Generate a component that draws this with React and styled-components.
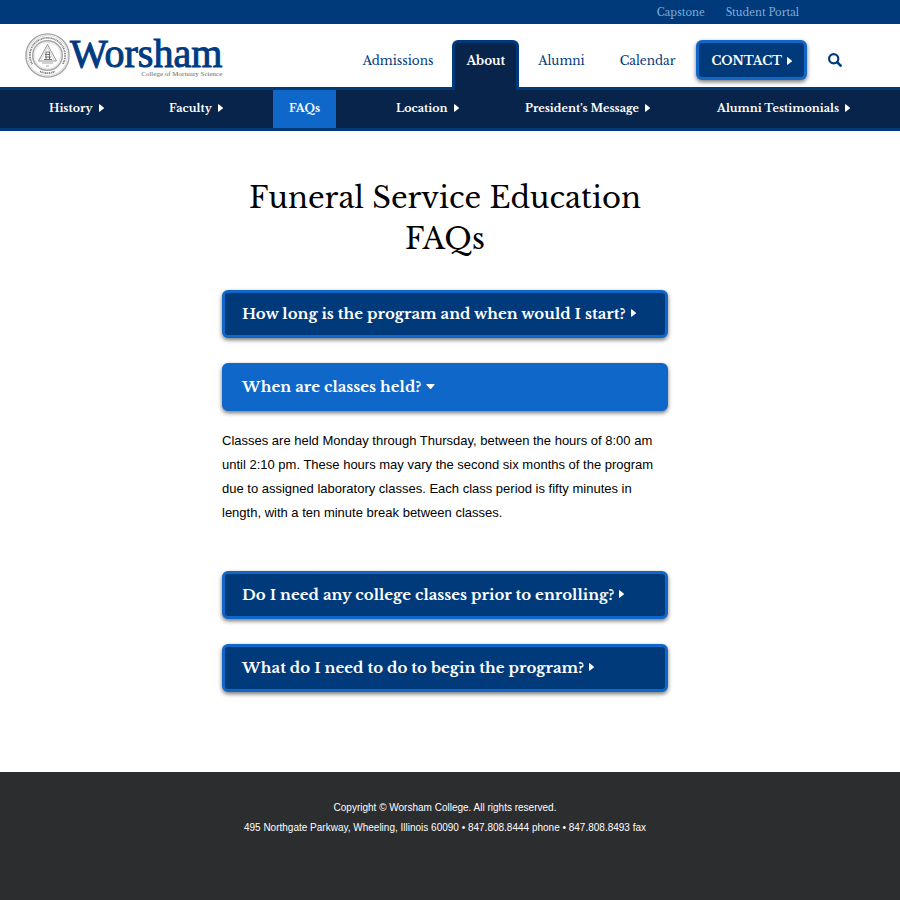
import React, { useState } from "react";
import styled, { createGlobalStyle, css } from "styled-components";

const color = {
  blue: "#003a7a",
  bright: "#0f67c9",
  navy: "#08244a",
  charcoal: "#2c2d2f",
};
const serif = '"Libre Baskerville", "Liberation Serif", serif';
const sans = '"Liberation Sans", Arial, sans-serif';

const GlobalStyle = createGlobalStyle`
  *, *::before, *::after { box-sizing: border-box; }
  body { margin: 0; background: #fff; color: #000; font-family: ${serif}; }
  a { color: inherit; text-decoration: none; }
  ul { list-style: none; margin: 0; padding: 0; }
`;

const Page = styled.div`
  display: flex;
  flex-direction: column;
  min-height: 100vh;
`;

const TopBar = styled.nav`
  display: flex;
  justify-content: flex-end;
  align-items: center;
  gap: 21px;
  height: 24px;
  padding-right: 101px;
  background: ${color.blue};
  color: #83add9;
  font-size: 10px;
`;

const Header = styled.header`
  display: flex;
  justify-content: space-between;
  height: 63px;
  padding: 0 58px 0 25px;
`;

const Brand = styled.a`
  display: flex;
  align-items: flex-start;
  padding-top: 9px;
  font-family: "Liberation Serif", serif;
`;

const Seal = styled.svg`
  width: 45px;
  height: 45px;
`;

const Wordmark = styled.span`
  display: flex;
  flex-direction: column;
  align-items: flex-end;
`;

const BrandName = styled.span`
  margin-bottom: -5px;
  color: #003b82;
  font-size: 40px;
  line-height: 42px;
  -webkit-text-stroke: 1px #003b82;
`;

const Tagline = styled.span`
  color: #6b6b70;
  font-size: 7px;
  line-height: 8px;
`;

const MainNav = styled.nav`
  display: flex;
  align-items: flex-start;
  gap: 3px;
  padding-top: 16px;
  font-size: 12px;
  line-height: 42px;
  color: ${color.blue};
`;

const MainLink = styled.a`
  padding: 0 16px;
  ${({ $active }) =>
    $active &&
    css`
      align-self: stretch;
      margin-bottom: -3px;
      padding: 0 11px;
      border: solid ${color.blue};
      border-width: 3px 3px 0;
      border-radius: 6px 6px 0 0;
      background: ${color.navy};
      color: #fff;
      font-weight: bold;
      line-height: 36px;
      z-index: 1;
    `}
`;

const raised = css`
  border: 3px solid ${color.bright};
  border-radius: 6px;
  background: ${color.blue};
  color: #fff;
  font-family: ${serif};
  font-weight: bold;
  box-shadow: 0 2px 4px rgba(0, 0, 0, 0.55);
`;

const ContactLink = styled.a`
  ${raised}
  display: flex;
  align-items: center;
  gap: 5px;
  height: 40px;
  margin-left: 2px;
  padding: 2px 12px 0;
`;

const SearchButton = styled.button`
  display: flex;
  align-items: center;
  height: 40px;
  margin-left: 18px;
  padding: 0;
  border: 0;
  background: none;
  color: ${color.blue};
`;

const SubNav = styled.nav`
  padding-left: 33px;
  border: solid ${color.blue};
  border-width: 3px 0;
  background: ${color.navy};
`;

const SubList = styled.ul`
  display: grid;
  grid-template-columns: 120fr 120fr 107fr 129fr 192fr 199fr;
  justify-items: start;
`;

const SubLink = styled.a`
  display: flex;
  align-items: center;
  gap: 6px;
  height: 38px;
  padding: 0 16px 2px;
  background: ${({ $active }) => ($active ? color.bright : "transparent")};
  color: #fff;
  font-size: 11px;
  font-weight: bold;
  white-space: nowrap;
`;

const Main = styled.main`
  width: 100%;
  max-width: 456px;
  margin: 0 auto;
  padding: 47px 10px 80px 0;
`;

const Title = styled.h1`
  margin: 0 0 30px;
  font-size: 29px;
  font-weight: normal;
  line-height: 41px;
  text-align: center;
`;

const FaqList = styled.div`
  display: flex;
  flex-direction: column;
  gap: 25px;
`;

const Heading = styled.h2`
  margin: 0;
`;

const Question = styled.button`
  ${raised}
  display: flex;
  align-items: center;
  gap: 5px;
  width: 100%;
  height: 48px;
  padding: 0 17px 2px;
  background: ${({ $open }) => ($open ? color.bright : color.blue)};
  font-size: 15px;
  text-align: left;
  cursor: pointer;
`;

const Answer = styled.p`
  margin: 0;
  padding: 18px 0 21px;
  font-family: ${sans};
  font-size: 13px;
  line-height: 24px;
`;

const Footer = styled.footer`
  flex: 1;
  padding: 26px 10px 60px 0;
  background: ${color.charcoal};
  color: #fff;
  font-family: ${sans};
  font-size: 10px;
  line-height: 20px;
  text-align: center;
`;

const FooterLine = styled.p`
  margin: 0;
`;

const CaretRight = () => (
  <svg width="5" height="8" viewBox="0 0 5 8" aria-hidden="true">
    <path d="M0 .6Q0 0 .6.3L4.7 3.5Q5 4 4.7 4.5L.6 7.7Q0 8 0 7.4Z" fill="currentColor" />
  </svg>
);

const CaretDown = () => (
  <svg width="9" height="8" viewBox="0 0 9 8" aria-hidden="true">
    <path d="M.8 2H8.2Q9 2.2 8.5 2.8L5.1 6.8Q4.5 7.4 3.9 6.8L.5 2.8Q0 2.2.8 2Z" fill="currentColor" />
  </svg>
);

const SearchIcon = () => (
  <svg width="14" height="14" viewBox="0 0 14 14" fill="none" stroke="currentColor" aria-hidden="true">
    <circle cx="5.7" cy="5.7" r="4.6" strokeWidth="2.2" />
    <path d="M9.2 9.2L12.6 12.6" strokeWidth="2.6" strokeLinecap="round" />
  </svg>
);

const CollegeSeal = () => (
  <Seal viewBox="0 0 45 45" fill="none" stroke="#a4a4a6" aria-hidden="true">
    <circle cx="22.5" cy="22.5" r="21.6" strokeWidth="1.4" />
    <circle cx="22.5" cy="22.5" r="20" strokeWidth=".4" />
    <circle cx="22.5" cy="22.5" r="14.8" strokeWidth="1.5" />
    <circle cx="22.5" cy="22.5" r="13.2" strokeWidth=".3" />
    <path
      d="M7.3 31.3A17.6 17.6 0 1 1 37.7 31.3"
      stroke="#808084"
      strokeWidth="1.8"
      strokeDasharray="1 .6 1.4 .7 .8 .5"
    />
    <path d="M15 38.4A17.6 17.6 0 0 0 30 38.4" stroke="#808084" strokeWidth="1.8" strokeDasharray="1 .6 1.4 .7" />
    <path d="M22.5 11.5L31.5 28H13.5Z" stroke="#88888b" strokeWidth=".9" />
    <path d="M22.5 14.5L16 27M22.5 14.5L29 27" stroke="#aaa" strokeWidth=".5" />
    <path d="M21 19h4M20 21.5h5M20 24h6M19 26.5h8M21 19v7M24.5 19v7" stroke="#66666a" strokeWidth=".9" />
    <path d="M17 30h11M21 33h3" stroke="#9c9ca0" strokeWidth=".9" />
  </Seal>
);

const mainLinks = ["Admissions", "About", "Alumni", "Calendar"];
const subLinks = ["History", "Faculty", "FAQs", "Location", "President’s Message", "Alumni Testimonials"];

const faqs = [
  {
    q: "How long is the program and when would I start?",
    a: "Contact the college for the program length and start dates.",
  },
  {
    q: "When are classes held?",
    a: "Classes are held Monday through Thursday, between the hours of 8:00 am until 2:10 pm. These hours may vary the second six months of the program due to assigned laboratory classes. Each class period is fifty minutes in length, with a ten minute break between classes.",
  },
  {
    q: "Do I need any college classes prior to enrolling?",
    a: "Contact the college for the enrollment requirements.",
  },
  {
    q: "What do I need to do to begin the program?",
    a: "Contact the college to begin your application.",
  },
];

export default function App() {
  const [open, setOpen] = useState(1);
  return (
    <Page>
      <GlobalStyle />
      <TopBar aria-label="Quick links">
        <a href="#capstone">Capstone</a>
        <a href="#portal">Student Portal</a>
      </TopBar>
      <Header>
        <Brand href="#home">
          <CollegeSeal />
          <Wordmark>
            <BrandName>Worsham</BrandName>
            <Tagline>College of Mortuary Science</Tagline>
          </Wordmark>
        </Brand>
        <MainNav aria-label="Main">
          {mainLinks.map((name) => (
            <MainLink key={name} href={`#${name}`} $active={name === "About"}>
              {name}
            </MainLink>
          ))}
          <ContactLink href="#contact">
            CONTACT <CaretRight />
          </ContactLink>
          <SearchButton type="button" aria-label="Search">
            <SearchIcon />
          </SearchButton>
        </MainNav>
      </Header>
      <SubNav aria-label="About">
        <SubList>
          {subLinks.map((name) => (
            <li key={name}>
              <SubLink href={`#${name}`} $active={name === "FAQs"}>
                {name}
                {name !== "FAQs" && <CaretRight />}
              </SubLink>
            </li>
          ))}
        </SubList>
      </SubNav>
      <Main>
        <Title>Funeral Service Education FAQs</Title>
        <FaqList>
          {faqs.map(({ q, a }, i) => (
            <section key={q}>
              <Heading>
                <Question
                  type="button"
                  $open={open === i}
                  aria-expanded={open === i}
                  onClick={() => setOpen(open === i ? -1 : i)}
                >
                  {q}
                  {open === i ? <CaretDown /> : <CaretRight />}
                </Question>
              </Heading>
              {open === i && <Answer>{a}</Answer>}
            </section>
          ))}
        </FaqList>
      </Main>
      <Footer>
        <FooterLine>Copyright © Worsham College. All rights reserved.</FooterLine>
        <FooterLine>495 Northgate Parkway, Wheeling, Illinois 60090 • 847.808.8444 phone • 847.808.8493 fax</FooterLine>
      </Footer>
    </Page>
  );
}
